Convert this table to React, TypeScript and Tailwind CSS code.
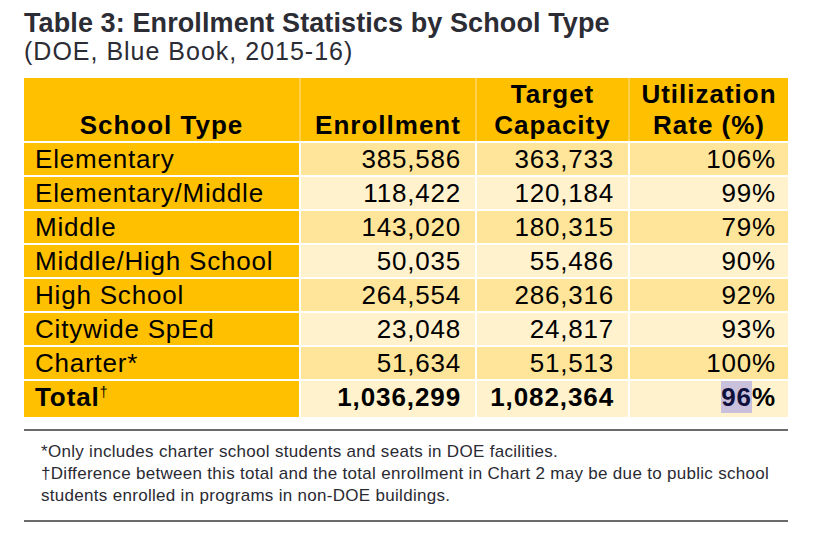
const rows = [
  { type: 'Elementary', enrollment: '385,586', capacity: '363,733', rate: '106%' },
  { type: 'Elementary/Middle', enrollment: '118,422', capacity: '120,184', rate: '99%' },
  { type: 'Middle', enrollment: '143,020', capacity: '180,315', rate: '79%' },
  { type: 'Middle/High School', enrollment: '50,035', capacity: '55,486', rate: '90%' },
  { type: 'High School', enrollment: '264,554', capacity: '286,316', rate: '92%' },
  { type: 'Citywide SpEd', enrollment: '23,048', capacity: '24,817', rate: '93%' },
  { type: 'Charter*', enrollment: '51,634', capacity: '51,513', rate: '100%' },
];

const cols = 'grid grid-cols-[275px_174px_151px_158px] gap-x-[2px]';

export default function App() {
  return (
    <div className="min-h-screen bg-white pl-[24px] pt-[9px] font-['Liberation_Sans',Arial,sans-serif]">
      <div className="w-[764px]">
        {/* Title */}
        <h1 className="text-[27px] font-bold leading-[28px] tracking-[0.1px] text-[#2c2c35]">
          Table 3: Enrollment Statistics by School Type
        </h1>
        <p className="text-[25px] leading-[28px] tracking-[1px] text-[#2c2c35]">(DOE, Blue Book, 2015-16)</p>

        {/* Table */}
        <div className="mt-[13px] flex flex-col gap-y-[2px] text-black">
          <div className={`${cols} h-[63px] bg-[#ffd04a] text-[26px] font-bold leading-[31px] tracking-[1px]`}>
            <div className="flex items-end justify-center bg-[#ffc000]">School Type</div>
            <div className="flex items-end justify-center bg-[#ffc000]">Enrollment</div>
            <div className="flex flex-col items-center justify-end bg-[#ffc000]">
              <span>Target</span>
              <span>Capacity</span>
            </div>
            <div className="flex flex-col items-center justify-end bg-[#ffc000]">
              <span>Utilization</span>
              <span>Rate (%)</span>
            </div>
          </div>

          {rows.map((r, i) => {
            const shade = i % 2 === 0 ? 'bg-[#ffe599]' : 'bg-[#fff2cc]';
            return (
              <div key={r.type} className={`${cols} h-[32px] text-[26px] leading-[31px] tracking-[0.8px]`}>
                <div className="bg-[#ffc000] pl-[11px] pt-[1px] whitespace-nowrap">{r.type}</div>
                <div className={`${shade} pr-[14px] pt-[1px] text-right`}>{r.enrollment}</div>
                <div className={`${shade} pr-[14px] pt-[1px] text-right`}>{r.capacity}</div>
                <div className={`${shade} pr-[12px] pt-[1px] text-right`}>{r.rate}</div>
              </div>
            );
          })}

          <div className={`${cols} h-[32px] text-[26px] font-bold leading-[31px] tracking-[0.9px]`}>
            <div className="bg-[#ffc000] pl-[11px] pt-[1px]">
              Total<span className="relative -top-[9px] text-[14px] font-normal">†</span>
            </div>
            <div className="bg-[#fff2cc] pr-[14px] pt-[1px] text-right">1,036,299</div>
            <div className="bg-[#fff2cc] pr-[14px] pt-[1px] text-right">1,082,364</div>
            <div className="bg-[#fff2cc] pr-[12px] text-right">
              <span className="inline-block bg-[#c9c0dc] pt-[1px] text-[#10103c]">96</span>%
            </div>
          </div>
        </div>

        {/* Footnotes */}
        <div className="mt-[16px] border-y-[2px] border-[#6a6a6a] pb-[13px] pl-[17px] pt-[10px] text-[17px] leading-[22px] tracking-[0.3px] text-[#2a2a33]">
          <p className="whitespace-nowrap">*Only includes charter school students and seats in DOE facilities.</p>
          <p className="whitespace-nowrap">
            †Difference between this total and the total enrollment in Chart 2 may be due to public school
            <br />
            students enrolled in programs in non-DOE buildings.
          </p>
        </div>
      </div>
    </div>
  );
}
